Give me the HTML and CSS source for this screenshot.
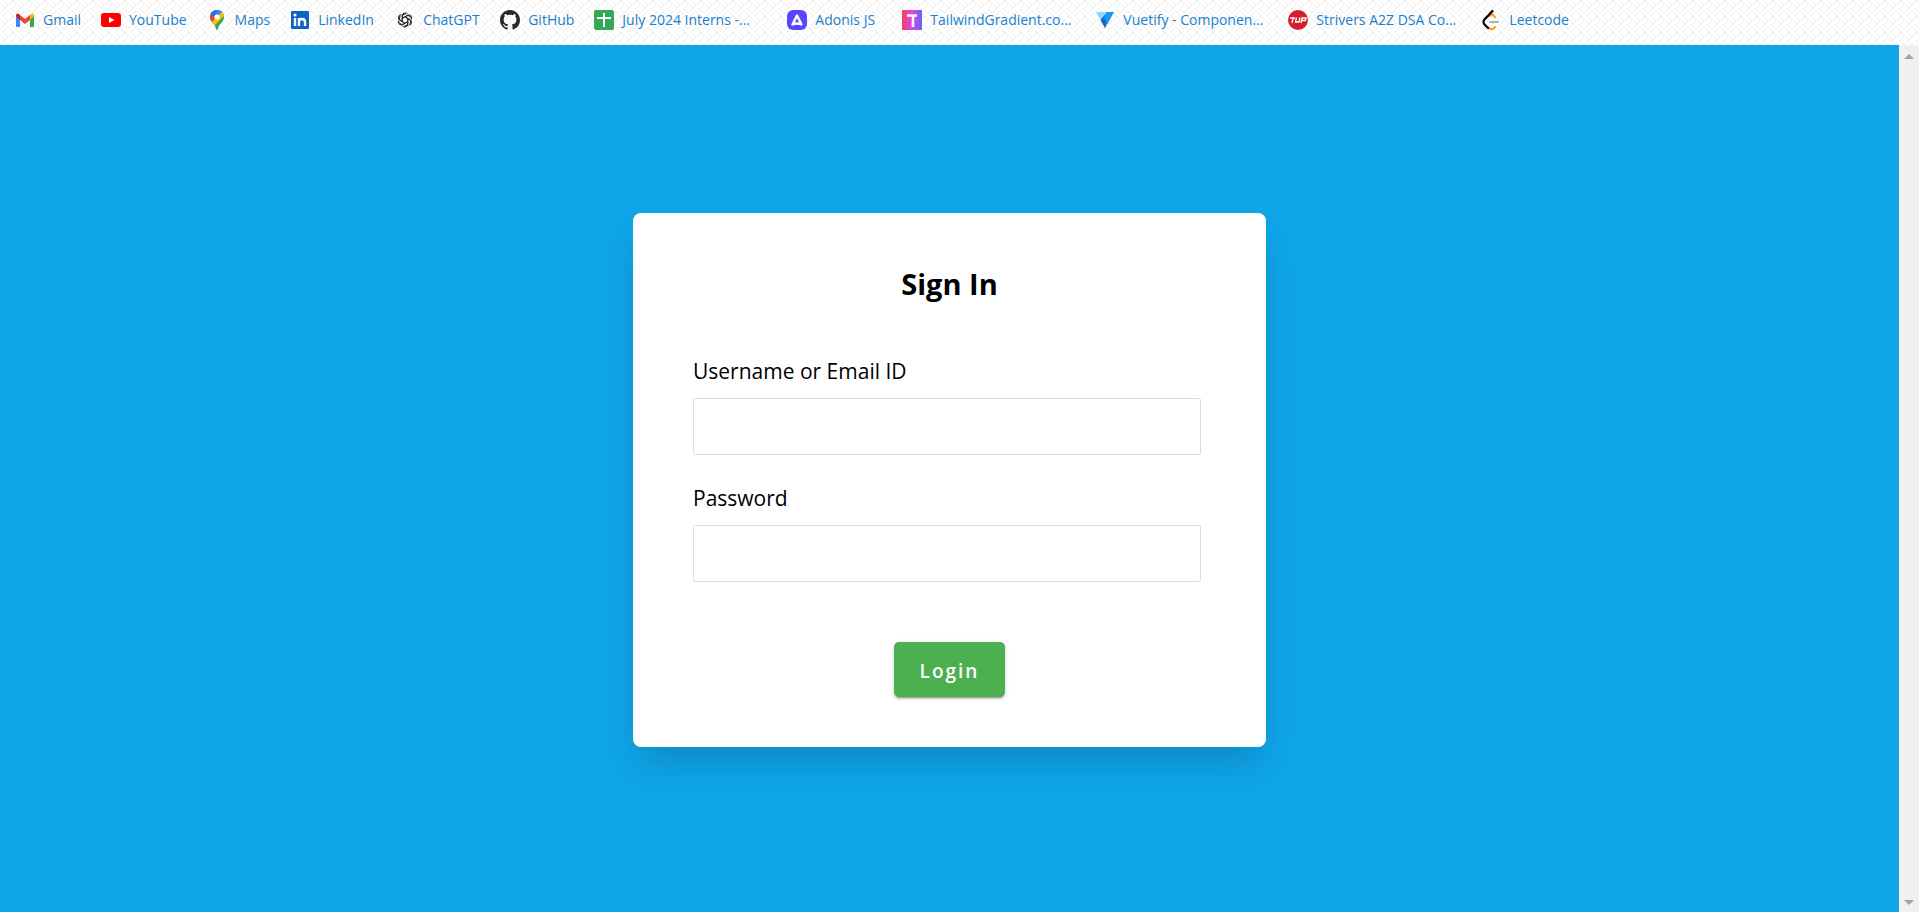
FILE: index.html
```html
<!DOCTYPE html>
<html lang="en">
<head>
<meta charset="utf-8">
<title>Sign In</title>
<link rel="stylesheet" href="styles.css">
</head>
<body>
<nav class="bookmarks" aria-label="Bookmarks">
  <svg class="weave" aria-hidden="true"><defs><pattern id="weave" width="16" height="16" patternUnits="userSpaceOnUse"><path d="M0 3l5 5M3 0l5 5M8 5l5-5M5 8l8-8M8 11l5 5M11 8l5 5M0 13l5-5M3 16l5-5M13 0l3 3M13 8l3-3" fill="none" stroke="#e9e9e9" stroke-width="1"/></pattern></defs><rect width="100%" height="100%" fill="url(#weave)"/></svg>
  <a class="bookmark" href="#"><svg class="icon" viewBox="0 0 20 20"><path d="M1 5v11q0 1 1 1h3V8z" fill="#4285f4"/><path d="M19 5v11q0 1-1 1h-3V8z" fill="#34a853"/><path d="M15 5l1.500-1.300Q19 3 19 6l-4 4z" fill="#fbbc04"/><path d="M5 5L3.500 3.700Q1 3 1 6l4 4z" fill="#c5221f"/><path d="M5 5l5 4 5-4v5l-5 4-5-4z" fill="#ea4335"/></svg><span class="label">Gmail</span></a>
  <a class="bookmark" href="#"><svg class="icon" viewBox="0 0 20 20"><rect y="3" width="20" height="14" rx="3" fill="#f00"/><path d="M8 7l5.500 3L8 13z" fill="#fff"/></svg><span class="label label-medium">YouTube</span></a>
  <a class="bookmark" href="#"><svg class="icon" viewBox="0 0 20 20"><defs><clipPath id="pin"><path d="M10 0c4 0 7 3 7 7 0 5-5 6-6 12q-1 2-2 0C8 13 3 12 3 7c0-4 3-7 7-7z"/></clipPath></defs><g clip-path="url(#pin)"><path d="M0 0h20v20H0z" fill="#34a853"/><path d="M3 0h14v4l-5 5-2-2L4 3z" fill="#4285f4"/><path d="M1 15L15 2l3 3L6 17z" fill="#fbbc04"/><path d="M9 7L4 2 0 8l5 4z" fill="#ea4335"/><path d="M3 3l4-4h5L7 7z" fill="#1a73e8"/><path d="M10 7l6-7h-5z" fill="#4285f4"/></g><circle cx="10" cy="7" r="2.600" fill="#fff"/></svg><span class="label">Maps</span></a>
  <a class="bookmark" href="#"><svg class="icon" viewBox="0 0 20 20"><rect x="1" y="1" width="18" height="18" rx="1" fill="#0a66c2"/><path d="M5 8v8M9 8v8M9 12q0-3 3-3t3 3v4" stroke="#fff" stroke-width="2.400" fill="none"/><circle cx="5" cy="5" r="1.600" fill="#fff"/></svg><span class="label label-medium">LinkedIn</span></a>
  <a class="bookmark" href="#"><svg class="icon" viewBox="-1 -1 22 22"><g fill="none" stroke="#222" stroke-width="1.100"><g id="petal"><path d="M7 10.500V5.200a3.200 3.200 0 0 1 6-1.400M7 8.200l4.500-2.600a3.200 3.200 0 0 1 4.700 2"/></g><use href="#petal" transform="rotate(60 10 10)"/><use href="#petal" transform="rotate(120 10 10)"/><use href="#petal" transform="rotate(180 10 10)"/><use href="#petal" transform="rotate(240 10 10)"/><use href="#petal" transform="rotate(300 10 10)"/></g></svg><span class="label label-medium">ChatGPT</span></a>
  <a class="bookmark" href="#"><svg class="icon" viewBox="0 0 16 16"><path fill="#24292f" d="M8 0C3.580 0 0 3.580 0 8c0 3.540 2.290 6.530 5.470 7.590.4.070.55-.17.55-.38 0-.19-.01-.82-.01-1.490-2.010.37-2.530-.49-2.690-.94-.09-.23-.48-.94-.82-1.130-.28-.15-.68-.52-.01-.53.63-.01 1.080.58 1.230.82.72 1.210 1.870.87 2.330.66.070-.52.28-.87.51-1.070-1.780-.2-3.640-.89-3.640-3.950 0-.87.31-1.590.82-2.150-.08-.2-.36-1.020.08-2.120 0 0 .67-.21 2.200.82.64-.18 1.320-.27 2-.27s1.360.09 2 .27c1.530-1.040 2.200-.82 2.200-.82.44 1.100.16 1.920.08 2.120.51.56.82 1.270.82 2.150 0 3.070-1.870 3.750-3.650 3.950.29.25.54.73.54 1.480 0 1.070-.01 1.930-.01 2.200 0 .21.15.46.55.38A8.010 8.010 0 0 0 16 8c0-4.420-3.580-8-8-8z"/></svg><span class="label">GitHub</span></a>
  <a class="bookmark" href="#"><svg class="icon" viewBox="0 0 20 20"><rect width="20" height="20" rx="2" fill="#34a853"/><path d="M10 3v14M3 8h14" stroke="#fff" stroke-width="2"/></svg><span class="label label-wide">July 2024 Interns -...</span></a>
  <a class="bookmark" href="#"><svg class="icon" viewBox="0 0 20 20"><rect width="20" height="20" rx="6" fill="#5a45ff"/><path d="M10 5.500l4.500 9q-4.500-2-9 0z" fill="none" stroke="#fff" stroke-width="2.400" stroke-linejoin="round"/></svg><span class="label label-large">Adonis JS</span></a>
  <a class="bookmark" href="#"><svg class="icon" viewBox="0 0 20 20"><defs><linearGradient id="tw"><stop stop-color="#f43f5e"/><stop offset=".5" stop-color="#d946ef"/><stop offset="1" stop-color="#6366f1"/></linearGradient></defs><rect width="20" height="20" fill="url(#tw)"/><path d="M5 5.500h10M11 5v12" stroke="#fff" stroke-width="2.600"/></svg><span class="label label-wide">TailwindGradient.co...</span></a>
  <a class="bookmark" href="#"><svg class="icon" viewBox="0 0 20 20"><path d="M1 2h9l1 8-1 8z" fill="#90d5ff"/><path d="M5.500 10L10 18l3-6-2.500-8z" fill="#1867c0"/><path d="M11 2h8l-6.500 12L9 8z" fill="#1697f6"/></svg><span class="label label-wide">Vuetify - Componen...</span></a>
  <a class="bookmark" href="#"><svg class="icon" viewBox="0 0 20 20"><circle cx="10" cy="10" r="10" fill="#d51e2d"/><path d="M2 8h5M5 8l-1 5M8.500 7.500l-1 4.500h3.500l1-4.500M13 13l1-5h4l-.5 2.500h-4" fill="none" stroke="#fff" stroke-width="1.300"/></svg><span class="label label-wide">Strivers A2Z DSA Co...</span></a>
  <a class="bookmark" href="#"><svg class="icon" viewBox="0 0 20 20"><g fill="none" stroke-width="2.200" stroke-linecap="round" stroke-linejoin="round"><path d="M8 6l3-2 3 3M8 18q4 2.500 6-1" stroke="#ffa116"/><path d="M9 12h8" stroke="#b3b3b3"/><path d="M11.500 1L3.500 9.500q-2 2.500 0 5L7 18" stroke="#000"/></g></svg><span class="label">Leetcode</span></a>
</nav>
<div class="viewport">
  <main class="page">
    <form class="card">
      <h1 class="title">Sign In</h1>
      <div class="field"><label class="field-label" for="user">Username or Email ID</label><input class="field-input" id="user" type="text"></div>
      <div class="field"><label class="field-label" for="pass">Password</label><input class="field-input" id="pass" type="password"></div>
      <button class="login" type="button">Login</button>
    </form>
  </main>
  <div class="scrollbar" aria-hidden="true">
    <svg class="arrow" viewBox="0 0 10 5"><path d="M5 0l5 5H0z" fill="#a3a3a3"/></svg>
    <svg class="arrow" viewBox="0 0 10 5"><path d="M5 5l5-5H0z" fill="#a3a3a3"/></svg>
  </div>
</div>
</body>
</html>
```
FILE: styles.css
```css
* { box-sizing: border-box; }
body {
  margin: 0;
  min-height: 100vh;
  display: flex;
  flex-direction: column;
  font-family: "Segoe UI", "Open Sans", "Noto Sans", sans-serif;
  color: #000;
}
.bookmarks {
  position: relative;
  display: flex;
  gap: 20px;
  height: 45px;
  padding: 10px 15px 15px;
  background: #fff;
  overflow: hidden;
}
.weave { position: absolute; inset: 0; width: 100%; height: 100%; }
.bookmark {
  position: relative;
  display: flex;
  align-items: center;
  gap: 8px;
  color: #1a80cc;
  font-size: 14px;
  line-height: 20px;
  text-decoration: none;
  white-space: nowrap;
}
.icon { width: 20px; height: 20px; flex: none; }
.label-medium { min-width: 57px; }
.label-large { min-width: 67px; }
.label-wide { min-width: 145px; }
.viewport { flex: 1; display: flex; }
.page {
  flex: 1;
  display: flex;
  align-items: center;
  justify-content: center;
  padding-top: 3px;
  background: #0fa5e9;
}
.card {
  display: flex;
  flex-direction: column;
  width: calc(100% / 3);
  padding: 47px 60px 50px;
  border-radius: 8px;
  background: #fff;
  box-shadow: 0 20px 36px -8px rgba(0, 0, 0, .19);
}
.title {
  margin: 0 0 46px;
  font-size: 29px;
  line-height: 48px;
  font-weight: 700;
  text-align: center;
}
.field { display: flex; flex-direction: column; margin: 0 5px 26px 0; }
.field-label { margin-bottom: 10px; font-size: 21px; line-height: 34px; }
.field-input {
  height: 57px;
  padding: 0 16px;
  border: 1px solid #dedede;
  border-radius: 2px;
  font: inherit;
  font-size: 21px;
}
.login {
  align-self: center;
  margin-top: 34px;
  width: 111px;
  height: 55px;
  padding: 2px 0 0;
  border: 0;
  border-radius: 5px;
  background: #4caf50;
  color: #fff;
  font: inherit;
  font-size: 19px;
  font-weight: 600;
  letter-spacing: 2px;
  box-shadow: 0 3px 1px -2px rgba(0, 0, 0, .2), 0 2px 2px rgba(0, 0, 0, .14), 0 1px 5px rgba(0, 0, 0, .12);
}
.scrollbar {
  display: flex;
  flex-direction: column;
  align-items: center;
  justify-content: space-between;
  width: 20px;
  padding: 9px 0 7px;
  background: #f0f0f0;
}
.arrow { width: 10px; height: 5px; }
```
